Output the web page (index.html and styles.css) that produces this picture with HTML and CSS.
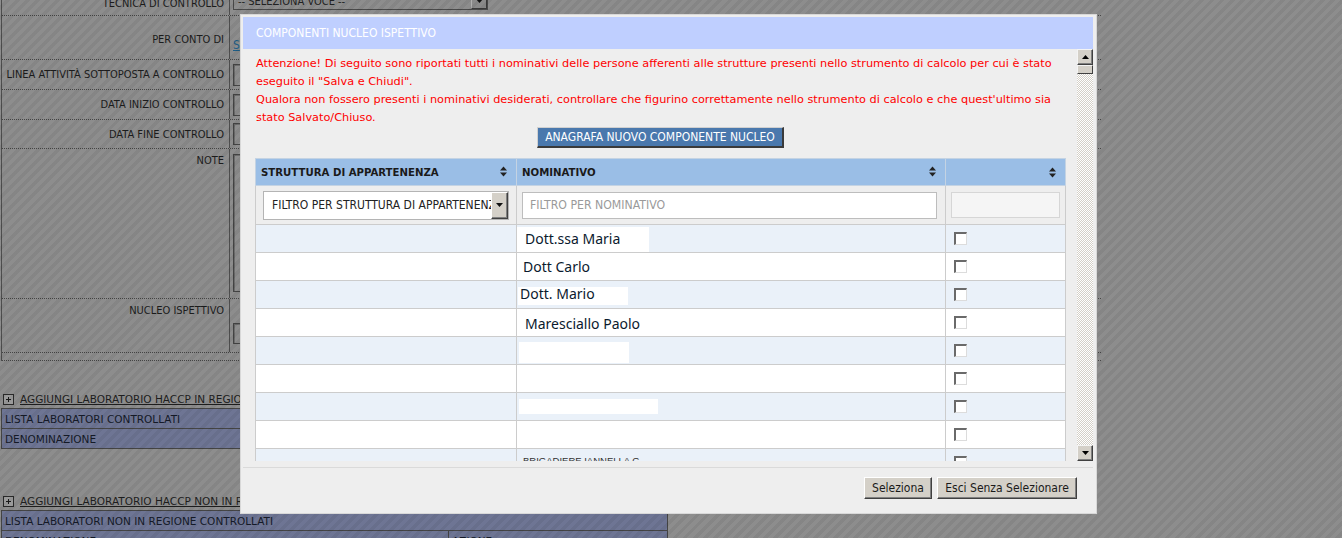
FILE: index.html
```html
<!DOCTYPE html>
<html lang="it">
<head>
<meta charset="utf-8">
<title>Componenti nucleo ispettivo</title>
<link rel="stylesheet" href="styles.css">
</head>
<body>
<div class="page">
  <div class="form">
    <div class="frow r1">
      <div class="lbl">TECNICA DI CONTROLLO</div>
      <div class="val"><div class="psel"><span class="psel-txt">-- SELEZIONA VOCE --</span><span class="psel-btn"><svg width="7" height="4" viewBox="0 0 7 4"><path d="M0 0H7L3.5 4Z" fill="#111"/></svg></span></div></div>
    </div>
    <div class="frow r2">
      <div class="lbl">PER CONTO DI</div>
      <div class="val top"><a class="plink" href="#">S</a></div>
    </div>
    <div class="frow r3">
      <div class="lbl">LINEA ATTIVITÀ SOTTOPOSTA A CONTROLLO</div>
      <div class="val"><div class="pbox"></div></div>
    </div>
    <div class="frow r4">
      <div class="lbl">DATA INIZIO CONTROLLO</div>
      <div class="val"><div class="pbox"></div></div>
    </div>
    <div class="frow r5">
      <div class="lbl">DATA FINE CONTROLLO</div>
      <div class="val"><div class="pbox"></div></div>
    </div>
    <div class="frow r6">
      <div class="lbl lbl-top">NOTE</div>
      <div class="val top"><div class="parea"></div></div>
    </div>
    <div class="frow r7">
      <div class="lbl lbl-top">NUCLEO ISPETTIVO</div>
      <div class="val top"><div class="pbox pbox-n"></div></div>
    </div>
    <div class="fend"></div>
  </div>

  <div class="labsec first">
    <div class="addrow"><span class="plus"></span><a class="addlink" href="#">AGGIUNGI LABORATORIO HACCP IN REGIONE</a></div>
    <div class="labtable">
      <div class="labrow">LISTA LABORATORI CONTROLLATI</div>
      <div class="labrow">DENOMINAZIONE</div>
    </div>
  </div>

  <div class="labsec second">
    <div class="addrow"><span class="plus"></span><a class="addlink" href="#">AGGIUNGI LABORATORIO HACCP NON IN REGIONE</a></div>
    <div class="labtable">
      <div class="labrow">LISTA LABORATORI NON IN REGIONE CONTROLLATI</div>
      <div class="labrow split"><span class="c1">DENOMINAZIONE</span><span class="c2">AZIONE</span></div>
    </div>
  </div>
</div>

<div class="overlay"></div>

<div class="dialog">
  <div class="dlg-head">COMPONENTI NUCLEO ISPETTIVO</div>
  <div class="dlg-body">
    <div class="dlg-content">
      <p class="warn">Attenzione! Di seguito sono riportati tutti i nominativi delle persone afferenti alle strutture presenti nello strumento di calcolo per cui è stato<br>eseguito il "Salva e Chiudi".<br>Qualora non fossero presenti i nominativi desiderati, controllare che figurino correttamente nello strumento di calcolo e che quest'ultimo sia<br>stato Salvato/Chiuso.</p>
      <div class="btnwrap"><button class="bluebtn">ANAGRAFA NUOVO COMPONENTE NUCLEO</button></div>
      <table class="grid">
        <colgroup><col class="w1"><col class="w2"><col class="w3"></colgroup>
        <thead>
          <tr class="hdr">
            <th><span>STRUTTURA DI APPARTENENZA</span><svg class="sort" width="7" height="11" viewBox="0 0 7 11"><path d="M0 4.5L3.5 0.5L7 4.5Z M0 6.5L3.5 10.5L7 6.5Z" fill="#222"/></svg></th>
            <th><span>NOMINATIVO</span><svg class="sort" width="7" height="11" viewBox="0 0 7 11"><path d="M0 4.5L3.5 0.5L7 4.5Z M0 6.5L3.5 10.5L7 6.5Z" fill="#222"/></svg></th>
            <th><span></span><svg class="sort" width="7" height="11" viewBox="0 0 7 11"><path d="M0 4.5L3.5 0.5L7 4.5Z M0 6.5L3.5 10.5L7 6.5Z" fill="#222"/></svg></th>
          </tr>
          <tr class="flt">
            <td><div class="fsel"><span class="fsel-txt">FILTRO PER STRUTTURA DI APPARTENENZA</span><span class="fsel-btn"><svg width="7" height="4" viewBox="0 0 7 4"><path d="M0 0H7L3.5 4Z" fill="#111"/></svg></span></div></td>
            <td><div class="finput">FILTRO PER NOMINATIVO</div></td>
            <td><div class="finput dis"></div></td>
          </tr>
        </thead>
        <tbody>
          <tr class="odd"><td></td><td class="nm"><span class="mask m1">Dott.ssa Maria</span></td><td class="ck"><span class="cb"></span></td></tr>
          <tr><td></td><td class="nm"><span class="name n2">Dott Carlo</span></td><td class="ck"><span class="cb"></span></td></tr>
          <tr class="odd"><td></td><td class="nm"><span class="mask m3">Dott. Mario</span></td><td class="ck"><span class="cb"></span></td></tr>
          <tr><td></td><td class="nm"><span class="name n4">Maresciallo Paolo</span></td><td class="ck"><span class="cb"></span></td></tr>
          <tr class="odd"><td></td><td class="nm"><span class="mask m5"></span></td><td class="ck"><span class="cb"></span></td></tr>
          <tr><td></td><td class="nm"></td><td class="ck"><span class="cb"></span></td></tr>
          <tr class="odd"><td></td><td class="nm"><span class="mask m7"></span></td><td class="ck"><span class="cb"></span></td></tr>
          <tr><td></td><td class="nm"></td><td class="ck"><span class="cb"></span></td></tr>
          <tr class="odd"><td></td><td class="nm nmtop"><span class="small">BRIGADIERE IANNELLA G.</span></td><td class="ck cktop"><span class="cb"></span></td></tr>
        </tbody>
      </table>
    </div>
    <div class="sbar">
      <div class="sbtn"><svg width="7" height="4" viewBox="0 0 7 4"><path d="M0 4H7L3.5 0Z" fill="#000"/></svg></div>
      <div class="sthumb"></div>
      <div class="strack"></div>
      <div class="sbtn"><svg width="7" height="4" viewBox="0 0 7 4"><path d="M0 0H7L3.5 4Z" fill="#000"/></svg></div>
    </div>
  </div>
  <div class="dlg-foot">
    <button class="wbtn b1">Seleziona</button>
    <button class="wbtn b2">Esci Senza Selezionare</button>
  </div>
</div>
</body>
</html>
```

FILE: styles.css
```css
* { box-sizing: border-box; }
html, body { margin: 0; padding: 0; }
body {
  width: 1342px;
  height: 538px;
  overflow: hidden;
  position: relative;
  background: #8d8d8d;
  font-family: "DejaVu Sans Condensed", "DejaVu Sans", sans-serif;
  font-size: 11px;
  color: #1c1c1c;
}

/* ---------- background page ---------- */
.form {
  width: 1100px;
  margin: -12px 0 0 1px;
  border-left: 1px solid #4e4e4e;
}
.frow {
  display: grid;
  grid-template-columns: 228px 1fr;
  border-bottom: 1px dotted #454545;
}
.r1 { height: 28px; }
.r2 { height: 44px; }
.r3 { height: 30px; }
.r4 { height: 30px; }
.r5 { height: 29px; }
.r6 { height: 150px; }
.r7 { height: 54px; }
.fend { height: 8px; border-bottom: 1px dotted #454545; }
.lbl {
  border-right: 1px solid #4e4e4e;
  padding-right: 5px;
  display: flex;
  align-items: center;
  justify-content: flex-end;
  white-space: nowrap;
}
.r1 .lbl, .r2 .lbl { padding-top: 3px; }
.lbl-top { align-items: flex-start; padding-top: 5px; }
.val { display: flex; align-items: center; padding-left: 3px; }
.val.top { align-items: flex-start; }
.r2 .val { padding-top: 22px; }
.r6 .val { padding-top: 5px; }
.r7 .val { padding-top: 24px; }

.psel {
  width: 255px; height: 18px;
  border: 1px solid #4a4a4a;
  display: flex; align-items: center;
  margin-top: -1px;
}
.psel-txt { flex: 1; padding-left: 4px; color: #222; }
.psel-btn {
  width: 16px; height: 16px;
  background: #8a8a8a;
  border-top: 1px solid #b0b0b0; border-left: 1px solid #b0b0b0;
  border-right: 1px solid #3a3a3a; border-bottom: 1px solid #3a3a3a;
  display: flex; align-items: center; justify-content: center;
}
.plink { color: #1d5d86; text-decoration: underline; font-size: 12px; }
.pbox {
  width: 300px; height: 22px;
  border: 1px solid #454545;
  box-shadow: inset 1px 1px 0 #6c6c6c;
}
.pbox-n { height: 21px; }
.parea {
  width: 400px; height: 138px;
  border: 1px solid #454545;
  box-shadow: inset 1px 1px 0 #6c6c6c;
}

.labsec.first { margin-top: 31px; }
.labsec.second { margin-top: 45px; }
.addrow {
  height: 14px;
  display: flex; align-items: center;
  padding-left: 3px;
  margin-bottom: 2px;
}
.plus {
  width: 11px; height: 11px;
  border: 1px solid #2a2a2a;
  position: relative;
  margin-right: 6px;
  background: #9a9a9a;
}
.plus::before, .plus::after {
  content: ""; position: absolute; background: #1a1a1a;
}
.plus::before { left: 2px; right: 2px; top: 4px; height: 1px; }
.plus::after { top: 2px; bottom: 2px; left: 4px; width: 1px; }
.addlink { color: #1e1e1e; text-decoration: underline; font-family: "DejaVu Sans", sans-serif; font-size: 10.5px; }
.labtable {
  width: 667px;
  margin-left: 1px;
  border: 1px solid #454545;
  border-bottom: none;
  background: #6e7594;
}
.labrow {
  height: 20px;
  border-bottom: 1px solid #454545;
  padding-left: 3px;
  display: flex; align-items: center;
  font-family: "DejaVu Sans", sans-serif;
  font-size: 10.5px;
  color: #151a28;
}
.labrow.split { padding-left: 0; }
.labrow .c1 { width: 447px; padding-left: 3px; height: 100%; display: flex; align-items: center; border-right: 1px solid #454545; }
.labrow .c2 { padding-left: 3px; }

.overlay {
  position: absolute; inset: 0;
  background: repeating-linear-gradient(135deg, rgba(0,0,0,0) 0 3.6px, rgba(0,0,0,0.055) 3.6px 7.1px);
}

/* ---------- dialog ---------- */
.dialog {
  position: absolute;
  left: 240px; top: 14px;
  width: 857px; height: 500px;
  background: #eeeeee;
  border: 1px solid #d8d8d8;
  padding: 2px 3px 2px 2px;
  display: flex; flex-direction: column;
}
.dlg-head {
  height: 32px;
  flex: none;
  background: #bfcfff;
  color: #fff;
  font-size: 12px;
  padding-left: 13px;
  display: flex; align-items: center;
}
.dlg-body {
  height: 412px;
  flex: none;
  display: flex;
}
.dlg-content {
  width: 834px;
  height: 412px;
  overflow: hidden;
}
.warn {
  margin: 0;
  padding: 6px 0 0 13px;
  color: #ff0000;
  font-family: "DejaVu Sans", sans-serif;
  font-size: 11.3px;
  line-height: 18px;
  white-space: nowrap;
}
.btnwrap { display: flex; justify-content: center; margin-top: 0; }
.bluebtn {
  height: 21px; width: 247px;
  background: #4a78ad;
  color: #fff;
  font-family: "DejaVu Sans Condensed", "DejaVu Sans", sans-serif;
  font-size: 12px;
  border: none;
  border-top: 1px solid #d0d0d0; border-left: 1px solid #d0d0d0;
  border-right: 2px solid #3a3a3a; border-bottom: 2px solid #3a3a3a;
  padding: 0;
  margin-left: 1px;
}
.grid {
  margin: 10px 0 0 12px;
  width: 810px;
  border-collapse: collapse;
  table-layout: fixed;
}
.w1 { width: 261px; }
.w2 { width: 429px; }
.w3 { width: 120px; }
.grid th, .grid td { border: 1px solid #cccccc; padding: 0; }
.hdr th {
  height: 27px;
  background: #9abee6;
  border-color: #c4d3e3;
  text-align: left;
  font-weight: bold;
  font-size: 11.3px;
  color: #1a1a1a;
  padding: 0 9px 0 5px;
}
.hdr th span { display: inline-block; vertical-align: middle; }
.sort { float: right; margin-top: 1px; }
.flt td { height: 39px; background: #eeeeee; }
.fsel {
  margin-left: 7px;
  width: 246px; height: 29px;
  background: #fff;
  border: 1px solid #b4b4b4;
  display: flex; align-items: center;
  overflow: hidden;
}
.fsel-txt { flex: 1; padding-left: 8px; white-space: nowrap; overflow: hidden; color: #222; font-size: 12px; }
.fsel-btn {
  flex: none;
  width: 17px; height: 27px;
  background: #d4d0c8;
  border-top: 1px solid #fff; border-left: 1px solid #fff;
  border-right: 1px solid #404040; border-bottom: 1px solid #404040;
  box-shadow: inset -1px -1px 0 #808080;
  display: flex; align-items: center; justify-content: center;
}
.finput {
  margin-left: 5px;
  width: 415px; height: 27px;
  background: #fff;
  border: 1px solid #bdbdbd;
  color: #9a9a9a;
  font-size: 12.2px;
  padding-left: 7px;
  display: flex; align-items: center;
}
.finput.dis { width: 109px; background: #f5f5f5; border-color: #d6d6d6; margin-left: 5px; height: 26px; }
.grid tbody td { height: 28px; background: #fff; }
.grid tbody tr.odd td { background: #eaf1f9; }
.nm { font-family: "Noto Sans", "Open Sans", sans-serif; font-size: 14px; color: #0b1a2e; vertical-align: middle; }
.mask { display: inline-block; background: #fff; vertical-align: middle; }
.m1 { width: 132px; height: 25px; padding-left: 8px; line-height: 24px; margin-top: 2px; }
.m3 { width: 110px; height: 18px; padding-left: 2px; margin-left: 1px; line-height: 14px; }
.m5 { width: 110px; height: 21px; margin-left: 2px; margin-top: 3px; }
.m7 { width: 139px; height: 15px; margin-left: 2px; margin-top: -3px; }
.name { display: inline-block; }
.n2 { padding-left: 6px; }
.n4 { padding-left: 8px; margin-top: 2px; }
.nmtop { vertical-align: top; }
.small { display: block; padding: 6px 0 0 6px; font-family: "Liberation Sans", sans-serif; font-size: 9.5px; color: #333; }
.ck { padding-left: 8px !important; vertical-align: middle; }
.cktop { vertical-align: top; padding-top: 7px !important; }
.cb {
  display: block;
  width: 13px; height: 13px;
  background: #fff;
  border-top: 2px solid #6a6a6a; border-left: 2px solid #6a6a6a;
  border-right: 1px solid #dcdcdc; border-bottom: 1px solid #dcdcdc;
}

.sbar { width: 16px; height: 412px; display: flex; flex-direction: column; flex: none; }
.sbtn {
  height: 16px; flex: none;
  background: #d4d0c8;
  border-top: 1px solid #f4f4f4; border-left: 1px solid #f4f4f4;
  border-right: 1px solid #404040; border-bottom: 1px solid #404040;
  box-shadow: inset -1px -1px 0 #808080;
  display: flex; align-items: center; justify-content: center;
}
.sthumb {
  height: 9px; flex: none;
  background: #d4d0c8;
  border-top: 1px solid #f4f4f4; border-left: 1px solid #f4f4f4;
  border-right: 1px solid #404040; border-bottom: 1px solid #404040;
}
.strack {
  flex: 1;
  background-image: conic-gradient(#ffffff 25%, #d4d0c8 0 50%, #ffffff 0 75%, #d4d0c8 0);
  background-size: 2px 2px;
}

.dlg-foot {
  flex: 1;
  margin-top: 6px;
  border-top: 1px solid #dadada;
  display: flex;
  justify-content: flex-end;
  align-items: flex-start;
  gap: 5px;
  padding: 9px 16px 0 0;
}
.wbtn {
  height: 22px;
  background: #d4d0c8;
  border-top: 1px solid #ffffff; border-left: 1px solid #ffffff;
  border-right: 1px solid #404040; border-bottom: 1px solid #404040;
  box-shadow: inset -1px -1px 0 #808080;
  font-family: "DejaVu Sans Condensed", "DejaVu Sans", sans-serif;
  font-size: 12px;
  color: #1a1a1a;
  padding: 0;
}
.b1 { width: 68px; }
.b2 { width: 140px; }
```
